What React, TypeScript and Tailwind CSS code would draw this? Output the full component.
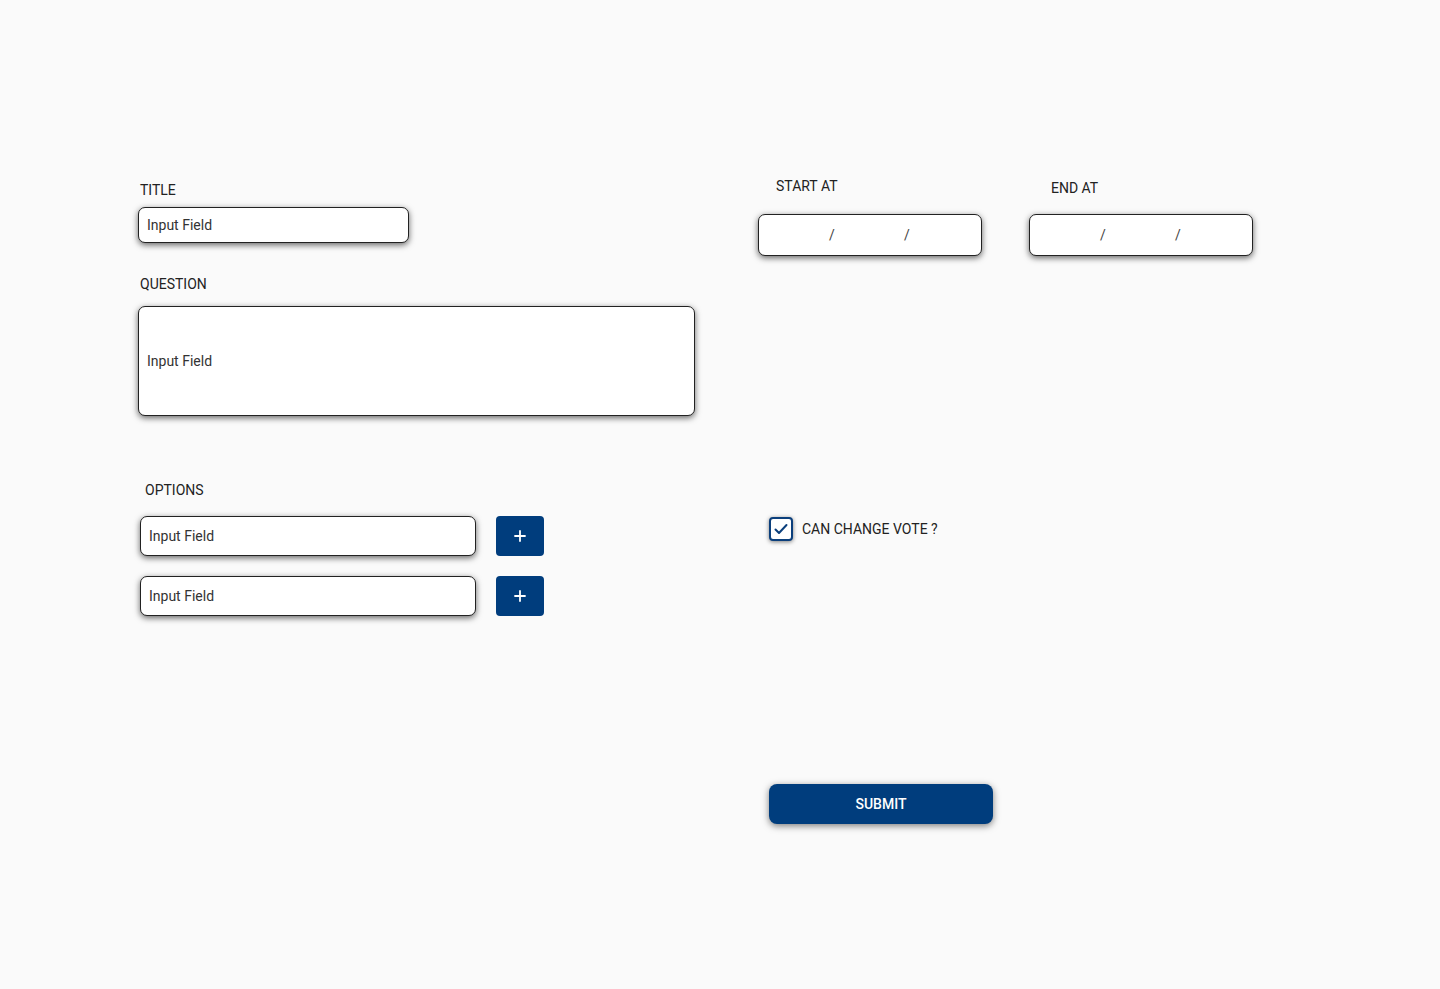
import React from 'react';

// Poll creation form

const fieldBox =
  'bg-white border border-[#222] rounded-[7px] shadow-[0_2px_6px_rgba(0,0,0,0.6)] flex items-center text-sm text-[#333]';

const Label: React.FC<{ children: React.ReactNode; className?: string }> = ({ children, className = '' }) => (
  <div className={`text-sm leading-5 text-[#222] ${className}`}>{children}</div>
);

const PlusButton: React.FC = () => (
  <button className="w-12 h-10 rounded-[4px] bg-[#003d7d] flex items-center justify-center">
    <svg width="14" height="14" viewBox="0 0 14 14" fill="none" stroke="white" strokeWidth="1.8" strokeLinecap="round">
      <path d="M7 2v10M2 7h10" />
    </svg>
  </button>
);

const DateBox: React.FC = () => (
  <div className={`${fieldBox} w-[224px] h-[42px] relative`}>
    <span className="absolute left-[70px] text-[#444]">/</span>
    <span className="absolute left-[145px] text-[#444]">/</span>
  </div>
);

export default function App() {
  return (
    <div
      className="min-h-screen bg-[#fafafa] flex items-start pl-[138px]"
      style={{ fontFamily: 'Roboto, "Liberation Sans", sans-serif' }}
    >
      {/* left column */}
      <div className="w-[557px] pt-[180px] flex flex-col">
        <Label className="ml-[2px] mb-[7px]">TITLE</Label>
        <div className={`${fieldBox} w-[271px] h-9 px-2`}>Input Field</div>

        <Label className="ml-[2px] mt-[31px] mb-3">QUESTION</Label>
        <div className={`${fieldBox} w-[557px] h-[110px] px-2`}>Input Field</div>

        <Label className="ml-[7px] mt-16 mb-4">OPTIONS</Label>
        <div className="ml-[2px] flex flex-col gap-5">
          {[0, 1].map(i => (
            <div key={i} className="flex items-center gap-5">
              <div className={`${fieldBox} w-[336px] h-10 px-2`}>Input Field</div>
              <PlusButton />
            </div>
          ))}
        </div>
      </div>

      {/* right column */}
      <div className="ml-[63px] pt-[176px] flex flex-col">
        <div className="flex gap-[47px]">
          <div className="flex flex-col">
            <Label className="ml-[18px] mb-[18px]">START AT</Label>
            <DateBox />
          </div>
          <div className="flex flex-col">
            <Label className="ml-[22px] mt-[2px] mb-4">END AT</Label>
            <DateBox />
          </div>
        </div>

        <div className="ml-[11px] mt-[261px] flex items-center gap-[9px]">
          <div className="w-6 h-6 rounded-[4px] border-2 border-[#0b3f7c] bg-white shadow-[0_1px_4px_rgba(0,0,0,0.5)] flex items-center justify-center">
            <svg width="14" height="12" viewBox="0 0 14 12" fill="none" stroke="#0b3f7c" strokeWidth="2" strokeLinecap="round" strokeLinejoin="round">
              <path d="M1.5 6.5l3.5 3.5 7.5-8" />
            </svg>
          </div>
          <span className="text-sm text-[#222]">CAN CHANGE VOTE ?</span>
        </div>

        <button className="ml-[11px] mt-[243px] w-[224px] h-10 rounded-[8px] bg-[#003d7d] text-white text-sm font-medium shadow-[0_2px_7px_rgba(0,0,0,0.5)]">
          SUBMIT
        </button>
      </div>
    </div>
  );
}
